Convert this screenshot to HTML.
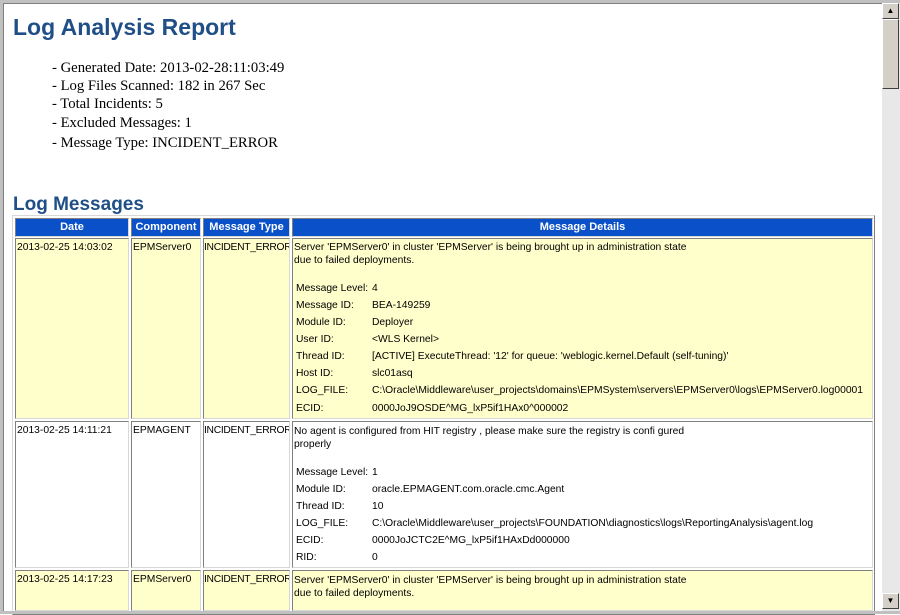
<!DOCTYPE html>
<html><head><style>
body{margin:0;width:900px;height:614px;overflow:hidden;background:#fff;position:relative;font-family:"Liberation Sans",Arial,sans-serif}
.frame{position:absolute;left:0;top:0;width:900px;height:614px;box-sizing:border-box;border-top:3px solid #c0c0c0;border-left:3px solid #c0c0c0;border-bottom:3px solid #c0c0c0}
.frame:before{content:"";position:absolute;left:0;top:0;right:0;bottom:0;border-top:1px solid #808080;border-left:1px solid #808080}
h1{position:absolute;left:13px;top:14px;margin:0;font-size:23px;color:#1f4f86;font-weight:bold}
h2{position:absolute;left:13px;top:194px;margin:0;font-size:19px;color:#1f4f86;font-weight:bold}
.info{position:absolute;left:52px;font-family:"Liberation Serif",serif;font-size:14.7px;color:#000}
.c{position:absolute;box-sizing:border-box;font-size:10.3px;color:#000;border:1px solid;border-color:#808080 #d8d8d8 #d8d8d8 #808080;padding:3px 1px;overflow:hidden;white-space:nowrap}
.h{background:#0a50c8;color:#fff;font-weight:bold;text-align:center;padding:0;line-height:17px;font-size:11px}
.y{background:#ffffcc}.w{background:#fff}
.t{position:absolute;font-size:10.3px;white-space:nowrap}
.sb{position:absolute;left:882px;top:3px;width:18px;height:608px;background:#e8e8e8}
.btn{position:absolute;left:882px;width:17px;height:16px;background:#d4d0c8;border:1px solid;border-color:#fff #404040 #404040 #fff;box-sizing:border-box;font-size:8px;text-align:center;line-height:14px}
.it{padding-left:0;letter-spacing:-0.3px}
</style></head><body>
<div class="frame"></div>
<h1>Log Analysis Report</h1>
<div class="info" style="top:60px">- Generated Date: 2013-02-28:11:03:49</div>
<div class="info" style="top:78px">- Log Files Scanned: 182 in 267 Sec</div>
<div class="info" style="top:96px">- Total Incidents: 5</div>
<div class="info" style="top:115px">- Excluded Messages: 1</div>
<div class="info" style="top:135px">- Message Type: INCIDENT_ERROR</div>
<h2>Log Messages</h2>
<div style="position:absolute;left:12px;top:215px;width:863px;height:400px;border:1px solid;border-color:#d8d8d8 #808080 #808080 #d8d8d8;box-sizing:border-box"></div>
<div class="c h" style="left:15px;top:218px;width:114px;height:19px">Date</div>
<div class="c h" style="left:131px;top:218px;width:70px;height:19px">Component</div>
<div class="c h" style="left:203px;top:218px;width:87px;height:19px">Message Type</div>
<div class="c h" style="left:292px;top:218px;width:581px;height:19px">Message Details</div>

<div class="c y" style="left:15px;top:238px;width:114px;height:181px">2013-02-25 14:03:02</div>
<div class="c y" style="left:131px;top:238px;width:70px;height:181px">EPMServer0</div>
<div class="c y it" style="left:203px;top:238px;width:87px;height:181px">INCIDENT_ERROR</div>
<div class="c y" style="left:292px;top:238px;width:581px;height:181px"></div>

<div class="c w" style="left:15px;top:421px;width:114px;height:147px">2013-02-25 14:11:21</div>
<div class="c w" style="left:131px;top:421px;width:70px;height:147px">EPMAGENT</div>
<div class="c w it" style="left:203px;top:421px;width:87px;height:147px">INCIDENT_ERROR</div>
<div class="c w" style="left:292px;top:421px;width:581px;height:147px"></div>

<div class="c y" style="left:15px;top:570px;width:114px;height:41px">2013-02-25 14:17:23</div>
<div class="c y" style="left:131px;top:570px;width:70px;height:41px">EPMServer0</div>
<div class="c y it" style="left:203px;top:570px;width:87px;height:41px">INCIDENT_ERROR</div>
<div class="c y" style="left:292px;top:570px;width:581px;height:41px"></div>

<div class="t" style="left:294px;top:242px">Server 'EPMServer0' in cluster 'EPMServer' is being brought up in administration state</div>
<div class="t" style="left:294px;top:255px">due to failed deployments.</div>
<div class="t" style="left:296px;top:283px">Message Level:</div><div class="t" style="left:372px;top:283px">4</div>
<div class="t" style="left:296px;top:300px">Message ID:</div><div class="t" style="left:372px;top:300px">BEA-149259</div>
<div class="t" style="left:296px;top:317px">Module ID:</div><div class="t" style="left:372px;top:317px">Deployer</div>
<div class="t" style="left:296px;top:334px">User ID:</div><div class="t" style="left:372px;top:334px">&lt;WLS Kernel&gt;</div>
<div class="t" style="left:296px;top:351px">Thread ID:</div><div class="t" style="left:372px;top:351px">[ACTIVE] ExecuteThread: '12' for queue: 'weblogic.kernel.Default (self-tuning)'</div>
<div class="t" style="left:296px;top:368px">Host ID:</div><div class="t" style="left:372px;top:368px">slc01asq</div>
<div class="t" style="left:296px;top:385px">LOG_FILE:</div><div class="t" style="left:372px;top:385px">C:\Oracle\Middleware\user_projects\domains\EPMSystem\servers\EPMServer0\logs\EPMServer0.log00001</div>
<div class="t" style="left:296px;top:403px">ECID:</div><div class="t" style="left:372px;top:403px">0000JoJ9OSDE^MG_lxP5if1HAx0^000002</div>

<div class="t" style="left:294px;top:426px">No agent is configured from HIT registry , please make sure the registry is confi gured</div>
<div class="t" style="left:294px;top:439px">properly</div>
<div class="t" style="left:296px;top:467px">Message Level:</div><div class="t" style="left:372px;top:467px">1</div>
<div class="t" style="left:296px;top:484px">Module ID:</div><div class="t" style="left:372px;top:484px">oracle.EPMAGENT.com.oracle.cmc.Agent</div>
<div class="t" style="left:296px;top:501px">Thread ID:</div><div class="t" style="left:372px;top:501px">10</div>
<div class="t" style="left:296px;top:518px">LOG_FILE:</div><div class="t" style="left:372px;top:518px">C:\Oracle\Middleware\user_projects\FOUNDATION\diagnostics\logs\ReportingAnalysis\agent.log</div>
<div class="t" style="left:296px;top:535px">ECID:</div><div class="t" style="left:372px;top:535px">0000JoJCTC2E^MG_lxP5if1HAxDd000000</div>
<div class="t" style="left:296px;top:552px">RID:</div><div class="t" style="left:372px;top:552px">0</div>

<div class="t" style="left:294px;top:575px">Server 'EPMServer0' in cluster 'EPMServer' is being brought up in administration state</div>
<div class="t" style="left:294px;top:588px">due to failed deployments.</div>

<div style="position:absolute;left:0;top:611px;width:900px;height:3px;background:#c0c0c0"></div>
<div class="sb"></div>
<div class="btn" style="top:3px">▲</div>
<div class="btn" style="top:19px;height:70px"></div>
<div class="btn" style="top:593px">▼</div>
</body></html>
